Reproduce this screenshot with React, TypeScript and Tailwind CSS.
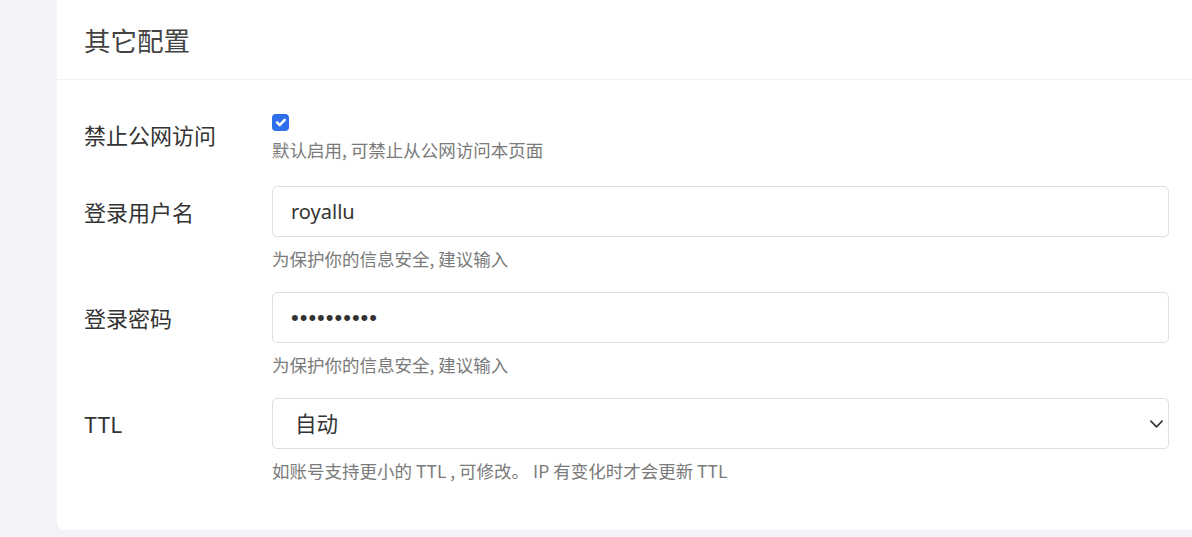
import { useState } from "react";

const cjk = { fontFamily: '"Noto Sans CJK SC", "Noto Sans", sans-serif' };

type FieldProps = {
  label: string;
  help: string;
  children: React.ReactNode;
};

function Field({ label, help, children }: FieldProps) {
  return (
    <div className="flex">
      <div className="w-[188px] shrink-0 h-[51px] flex items-center text-[22px] text-[#333]">
        {label}
      </div>
      <div className="flex-1">
        {children}
        <div className="mt-[11px] text-[17.5px] leading-[22px] text-[#7a7a7a]">
          {help}
        </div>
      </div>
    </div>
  );
}

export default function App() {
  const [blockPublic, setBlockPublic] = useState(true);
  const [username, setUsername] = useState("royallu");
  const [password, setPassword] = useState("abcdefghij");
  const [ttl, setTtl] = useState("auto");

  const inputClass =
    "h-[51px] w-full border border-[#dcdfe3] rounded-[5px] px-[18px] text-[20px] text-[#333] bg-white outline-none";

  return (
    <div
      className="min-h-[537px] bg-[#f3f4f8] pl-[57px] pb-[6px] overflow-hidden"
      style={cjk}
    >
      <div className="bg-white rounded-bl-[8px]">
        <div className="h-[80px] border-b border-[#f0f1f4] pl-[27px] flex items-center">
          <h2 className="text-[26.5px] text-[#444]">其它配置</h2>
        </div>

        <div className="pt-[29px] pb-[48px] pl-[27px] pr-[23px] flex flex-col gap-[22px]">
          {/* 禁止公网访问 */}
          <div className="flex">
            <div className="w-[188px] shrink-0 h-[51px] flex items-center text-[22px] text-[#333]">
              禁止公网访问
            </div>
            <div className="flex-1 pt-[5px] pb-[3px]">
              <button
                type="button"
                onClick={() => setBlockPublic(!blockPublic)}
                className={`block w-[17px] h-[17px] rounded-[4px] ${
                  blockPublic
                    ? "bg-[#2f6fec]"
                    : "bg-white border border-[#bbb]"
                }`}
              >
                {blockPublic && (
                  <svg viewBox="0 0 20 20" className="w-[17px] h-[17px]">
                    <path
                      d="m6 10 3 3 6-6"
                      fill="none"
                      stroke="#fff"
                      strokeWidth="3"
                      strokeLinecap="round"
                      strokeLinejoin="round"
                    />
                  </svg>
                )}
              </button>
              <div className="mt-[8px] text-[17.5px] leading-[22px] text-[#7a7a7a]">
                默认启用, 可禁止从公网访问本页面
              </div>
            </div>
          </div>

          <Field label="登录用户名" help="为保护你的信息安全, 建议输入">
            <input
              className={inputClass}
              style={{ fontFamily: '"Noto Sans", sans-serif' }}
              value={username}
              onChange={(e) => setUsername(e.target.value)}
            />
          </Field>

          <Field label="登录密码" help="为保护你的信息安全, 建议输入">
            <input
              type="password"
              className={`${inputClass} text-[22px] tracking-[1px]`}
              style={{ fontFamily: '"Liberation Sans", sans-serif' }}
              value={password}
              onChange={(e) => setPassword(e.target.value)}
            />
          </Field>

          <Field
            label="TTL"
            help="如账号支持更小的 TTL , 可修改。 IP 有变化时才会更新 TTL"
          >
            <div className="relative">
              <select
                className={`${inputClass} appearance-none pl-[22px] text-[21.5px]`}
                value={ttl}
                onChange={(e) => setTtl(e.target.value)}
              >
                <option value="auto">自动</option>
                <option value="60">1 分钟</option>
                <option value="120">2 分钟</option>
                <option value="600">10 分钟</option>
              </select>
              <svg
                viewBox="0 0 16 16"
                className="absolute right-[5px] top-1/2 -translate-y-1/2 w-[15px] h-[15px] pointer-events-none"
              >
                <path
                  d="m2 5 6 6 6-6"
                  fill="none"
                  stroke="#343a40"
                  strokeWidth="1.8"
                  strokeLinecap="round"
                  strokeLinejoin="round"
                />
              </svg>
            </div>
          </Field>
        </div>
      </div>
    </div>
  );
}
